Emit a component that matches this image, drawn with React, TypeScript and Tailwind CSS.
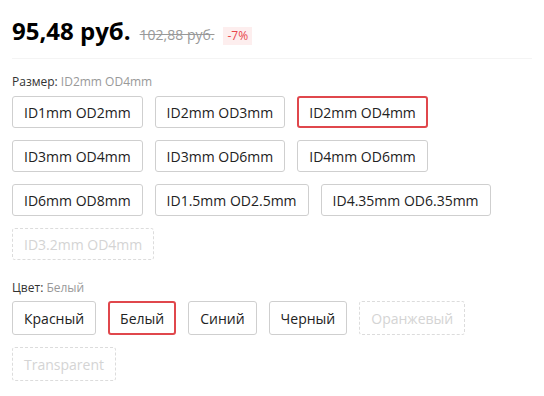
import React from "react";

const sizes = [
  "ID1mm OD2mm",
  "ID2mm OD3mm",
  "ID2mm OD4mm",
  "ID3mm OD4mm",
  "ID3mm OD6mm",
  "ID4mm OD6mm",
  "ID6mm OD8mm",
  "ID1.5mm OD2.5mm",
  "ID4.35mm OD6.35mm",
];
const colors = ["Красный", "Белый", "Синий", "Черный"];

function Option({
  label,
  selected,
  disabled,
  big,
}: {
  label: string;
  selected?: boolean;
  disabled?: boolean;
  big?: boolean;
}) {
  const base = big ? "h-[34px] text-[14px]" : "h-[32px] text-[14px]";
  if (disabled) {
    return (
      <div
        className={`${base} flex items-center rounded-[3px] border border-dashed border-[#dcdcdc] px-[11px] text-[#d4d4d4]`}
      >
        {label}
      </div>
    );
  }
  if (selected) {
    return (
      <div
        className={`${base} flex items-center rounded-[3px] border-2 border-[#e0474c] px-[10px] text-[#222]`}
      >
        {label}
      </div>
    );
  }
  return (
    <div
      className={`${base} flex items-center rounded-[3px] border border-[#cfcfcf] px-[11px] text-[#222]`}
    >
      {label}
    </div>
  );
}

export default function App() {
  return (
    <div
      className="w-[544px] h-[396px] bg-white px-3"
      style={{ fontFamily: '"Open Sans", sans-serif' }}
    >
      <div className="flex items-baseline gap-[9px] pt-[15px] pb-[11px] border-b border-[#f4f4f4]">
        <span className="text-[24px] font-bold text-black leading-8">95,48 руб.</span>
        <span className="text-[14px] text-[#999] line-through">102,88 руб.</span>
        <span className="text-[12px] text-[#e8474d] bg-[#fdeeee] px-1 leading-[18px]">-7%</span>
      </div>

      <div className="mt-[15px] text-[12px] leading-4 text-[#333]">
        Размер: <span className="text-[#999]">ID2mm OD4mm</span>
      </div>
      <div className="mt-[6px] flex flex-wrap gap-x-3 gap-y-3 w-[500px]">
        {sizes.map((s) => (
          <Option key={s} label={s} selected={s === "ID2mm OD4mm"} />
        ))}
        <Option label="ID3.2mm OD4mm" disabled />
      </div>

      <div className="mt-[20px] text-[12px] leading-4 text-[#333]">
        Цвет: <span className="text-[#999]">Белый</span>
      </div>
      <div className="mt-[5px] flex flex-wrap gap-x-3 gap-y-3 w-[500px]">
        {colors.map((c) => (
          <Option key={c} label={c} big selected={c === "Белый"} />
        ))}
        <Option label="Оранжевый" big disabled />
        <Option label="Transparent" big disabled />
      </div>
    </div>
  );
}
